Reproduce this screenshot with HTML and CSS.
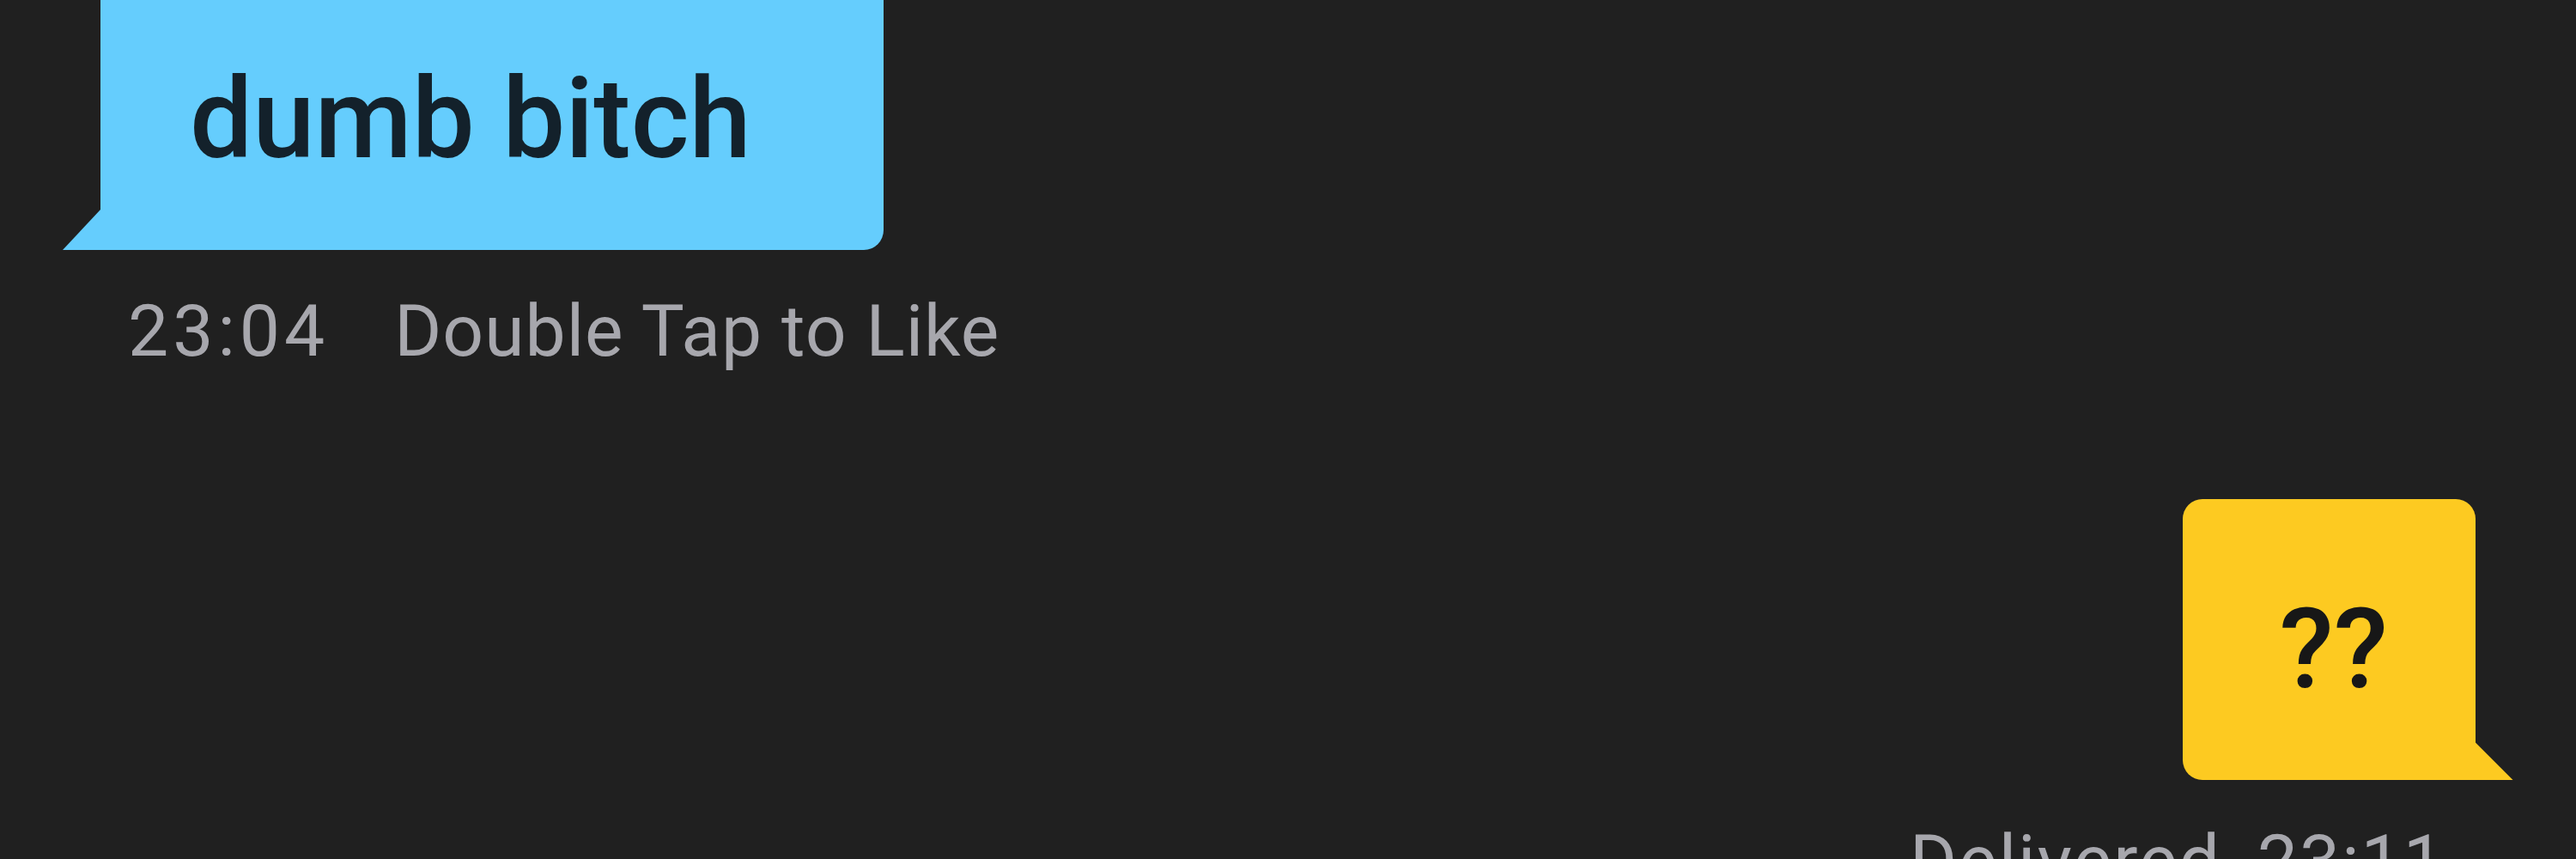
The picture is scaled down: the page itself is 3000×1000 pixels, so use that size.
FILE: index.html
```html
<!DOCTYPE html>
<html lang="en">
  <head>
    <meta charset="UTF-8" />
    <meta name="viewport" content="width=device-width, initial-scale=1.0" />
    <title>Chat</title>
    <link rel="stylesheet" href="styles.css">
  </head>
  <body>
    <div class="thread">
      <div class="msg received">
        <div class="bubble">dumb bitch</div>
        <div class="meta">
          <span class="time">23:04</span>
          <span class="hint">Double Tap to Like</span>
        </div>
      </div>

      <div class="msg sent">
        <div class="bubble">??</div>
        <div class="meta">
          <span class="status">Delivered</span>
          <span class="time">23:11</span>
        </div>
      </div>
    </div>
  </body>
</html>
```

FILE: styles.css
```css
body {
  margin: 0;
  background-color: #202020;
  font-family: Roboto, "Liberation Sans", sans-serif;
  overflow: hidden;
}

.thread {
  display: flex;
  flex-direction: column;
  margin-top: -40px; /* list is scrolled, first bubble starts above the fold */
  padding: 0 117px;
}

.msg {
  display: flex;
  flex-direction: column;
}

.received {
  align-self: flex-start;
  align-items: flex-start;
}

.sent {
  align-self: flex-end;
  align-items: flex-end;
  margin-top: 146px;
}

.bubble {
  position: relative;
  font-size: 130px;
  font-weight: 500;
  line-height: 1.2;
  color: #13212b;
}

.received .bubble {
  background-color: #65cdfd;
  border-radius: 23px 23px 23px 0;
  padding: 101px 154px 74px 104px;
}

.sent .bubble {
  background-color: #fdca21;
  border-radius: 23px 23px 0 23px;
  padding: 97px 102px 74px 113px;
  color: #171717;
}

/* little tails on the bottom corner */
.bubble::after {
  content: "";
  position: absolute;
  bottom: 0;
  width: 44px;
  height: 47px;
  background-color: inherit;
}

.received .bubble::after {
  left: -44px;
  clip-path: polygon(100% 0, 100% 100%, 0 100%);
}

.sent .bubble::after {
  right: -44px;
  height: 44px;
  clip-path: polygon(0 0, 100% 100%, 0 100%);
}

.meta {
  display: flex;
  margin-top: 46px;
  font-size: 84px;
  line-height: 1.172;
  color: #a7a7ad;
  letter-spacing: 1px;
}

.received .meta {
  padding-left: 32px;
  gap: 76px;
}

.received .meta .time {
  letter-spacing: 5px;
}

.sent .meta {
  padding-right: 35px;
  gap: 42px;
  letter-spacing: 2px;
}
```
